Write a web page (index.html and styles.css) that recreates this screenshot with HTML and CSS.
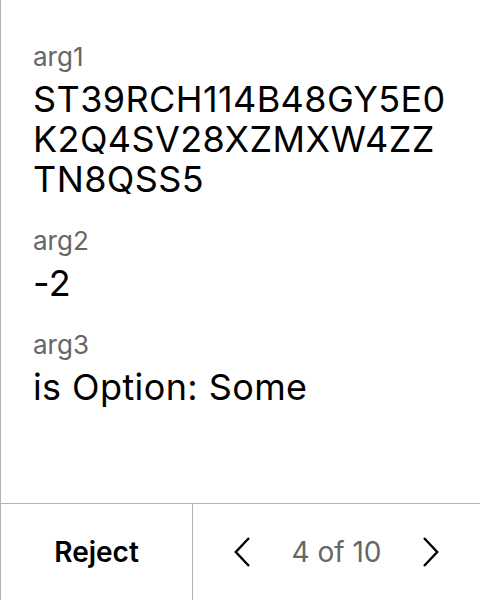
FILE: index.html
```html
<!DOCTYPE html>
<html>
<head>
<meta charset="utf-8">
<link rel="stylesheet" href="styles.css">
</head>
<body>
<div class="panel">
  <div class="content">
    <div class="field">
      <div class="label">arg1</div>
      <div class="value">ST39RCH114B48GY5E0<br>K2Q4SV28XZMXW4ZZ<br>TN8QSS5</div>
    </div>
    <div class="field">
      <div class="label">arg2</div>
      <div class="value">-2</div>
    </div>
    <div class="field">
      <div class="label">arg3</div>
      <div class="value">is Option: Some</div>
    </div>
  </div>
  <div class="footer">
    <div class="reject">Reject</div>
    <div class="pager">
      <svg class="chev" width="16" height="30" viewBox="0 0 16 30"><path d="M15 1 L1.8 15 L15 29" fill="none" stroke="#000" stroke-width="2.4"/></svg>
      <span class="count">4 of 10</span>
      <svg class="chev" width="16" height="30" viewBox="0 0 16 30"><path d="M1 1 L14.2 15 L1 29" fill="none" stroke="#000" stroke-width="2.4"/></svg>
    </div>
  </div>
</div>
</body>
</html>
```

FILE: styles.css
```css
html, body {
  margin: 0;
  padding: 0;
  background: #fff;
}
body {
  font-family: Inter, "Noto Sans", sans-serif;
  color: #000;
}
.panel {
  width: 480px;
  height: 600px;
  box-sizing: border-box;
  border-left: 1px solid #b3b3b3;
  display: flex;
  flex-direction: column;
}
.content {
  flex: 1;
  padding: 41px 0 0 32px;
  display: flex;
  flex-direction: column;
  gap: 26px;
}
.label {
  font-size: 26px;
  line-height: 32px;
  color: #666;
}
.value {
  font-size: 36px;
  line-height: 40px;
  letter-spacing: 0.4px;
  margin-top: 6px;
}
.footer {
  height: 96px;
  flex: none;
  border-top: 1px solid #b3b3b3;
  display: flex;
}
.reject {
  width: 191px;
  border-right: 1px solid #b3b3b3;
  display: flex;
  align-items: center;
  justify-content: center;
  font-size: 28px;
  font-weight: 600;
}
.pager {
  flex: 1;
  display: flex;
  align-items: center;
  justify-content: center;
  gap: 41px;
}
.count {
  font-size: 28px;
  color: #666;
}
```
